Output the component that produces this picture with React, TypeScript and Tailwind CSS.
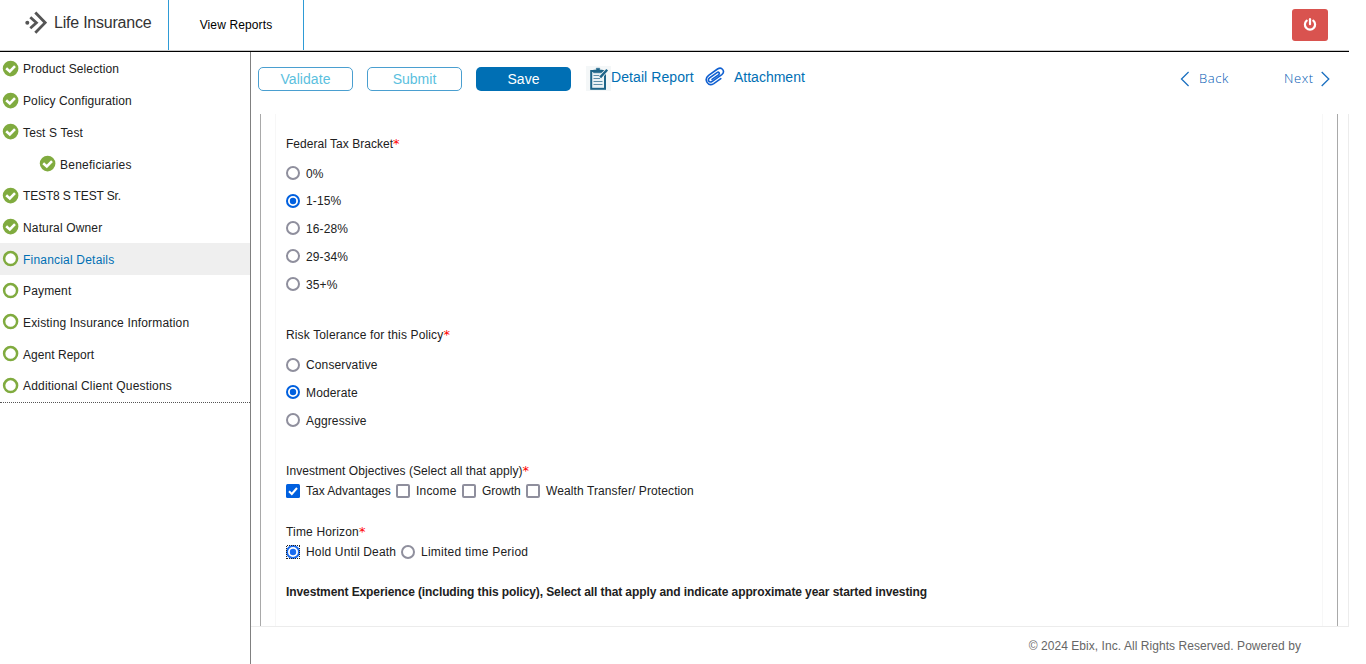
import React from "react";

type NavItem = { label: string; tracking: string; done: boolean; nested?: boolean; active?: boolean };

const NAV: NavItem[] = [
  { label: "Product Selection", tracking: "tracking-[0.12px]", done: true },
  { label: "Policy Configuration", tracking: "tracking-[0.1px]", done: true },
  { label: "Test S Test", tracking: "tracking-[0.14px]", done: true },
  { label: "Beneficiaries", tracking: "tracking-[0.23px]", done: true, nested: true },
  { label: "TEST8 S TEST Sr.", tracking: "tracking-[-0.15px]", done: true },
  { label: "Natural Owner", tracking: "tracking-[0.15px]", done: true },
  { label: "Financial Details", tracking: "tracking-[0.2px]", done: false, active: true },
  { label: "Payment", tracking: "tracking-[0.15px]", done: false },
  { label: "Existing Insurance Information", tracking: "tracking-[0.16px]", done: false },
  { label: "Agent Report", tracking: "tracking-[0.04px]", done: false },
  { label: "Additional Client Questions", tracking: "tracking-[0.18px]", done: false },
];

function StatusIcon({ done }: { done: boolean }) {
  return (
    <svg className="h-4 w-4 shrink-0 overflow-visible" viewBox="0 0 16 16">
      {done ? (
        <>
          <circle cx="7.6" cy="7.6" r="7.8" fill="#80ab3f" />
          <path d="M3.2 7.2 L6.8 10.4 L12 5.2" fill="none" stroke="#fff" strokeWidth="2.6" />
        </>
      ) : (
        <circle cx="7.6" cy="7.6" r="6.5" fill="#fff" stroke="#80ab3f" strokeWidth="2.5" />
      )}
    </svg>
  );
}

function Radio({ checked, focused }: { checked?: boolean; focused?: boolean }) {
  return (
    <svg className="h-[14px] w-[14px] shrink-0" viewBox="0 0 14 14">
      <circle
        cx="7"
        cy="7"
        r="6"
        fill="#fff"
        stroke={checked ? (focused ? "#1a6cf0" : "#0060df") : "#8f8f9d"}
        strokeWidth="2"
      />
      {checked && <circle cx="7" cy="7" r="3.2" fill={focused ? "#1a6cf0" : "#0060df"} />}
      {focused && (
        <path
          d="M1 0.5 H13.5 M0.5 1 V13.5 M13.5 1 V13.5 M1 13.5 H13.5"
          fill="none"
          stroke="#222"
          strokeDasharray="1 1"
          shapeRendering="crispEdges"
        />
      )}
    </svg>
  );
}

function Checkbox({ checked }: { checked?: boolean }) {
  return (
    <svg className="h-[14px] w-[14px] shrink-0" viewBox="0 0 14 14">
      {checked ? (
        <>
          <rect width="14" height="14" rx="1.5" fill="#0060df" />
          <path d="M3 7.2 L5.8 10 L11 4" fill="none" stroke="#fff" strokeWidth="2" />
        </>
      ) : (
        <rect x="1" y="1" width="12" height="12" rx="1" fill="#fff" stroke="#8f8f9d" strokeWidth="2" />
      )}
    </svg>
  );
}

function Label({ tracking, children }: { tracking: string; children: React.ReactNode }) {
  return (
    <div className="flex h-4 items-center whitespace-nowrap">
      <span className={tracking}>{children}</span>
      <span className="font-['DejaVu_Sans',sans-serif] text-[13px] leading-4 text-[#ff0000]">*</span>
    </div>
  );
}

function RadioList({ options, selected }: { options: string[]; selected: string }) {
  return (
    <div>
      {options.map((o) => (
        <div key={o} className="flex h-[27.8px] items-center gap-[6px]">
          <Radio checked={o === selected} />
          <span className="relative top-[0.65px] tracking-[0.13px]">{o}</span>
        </div>
      ))}
    </div>
  );
}

export default function App() {
  return (
    <div className="flex h-[664px] w-[1349px] flex-col overflow-hidden bg-white font-['Liberation_Sans',Arial,sans-serif] text-[12px] leading-4 text-[#212121]">
      <header className="flex h-[52px] shrink-0 border-b border-black">
        <div className="flex h-[51px] w-full border-b border-[#c8c8c8]">
          <div className="flex w-[169px] items-start border-r border-[#2e9bd6] pl-[25px] pt-[11px]">
            <svg className="h-6 w-[22px]" viewBox="0 0 22 24" fill="none" stroke="#555" strokeWidth="2.8">
              <circle cx="2.3" cy="11.7" r="2" fill="#555" stroke="none" />
              <path d="M5.3 6.2 L11.4 11.7 L5.3 17.2" />
              <path d="M10.3 1.6 L20.2 11.7 L10.3 21.8" />
            </svg>
            <span className="ml-[7px] mt-[2px] whitespace-nowrap text-[16px] leading-5 tracking-[-0.22px] text-[#333]">
              Life Insurance
            </span>
          </div>
          <div className="flex w-[135px] items-center justify-center whitespace-nowrap border-r border-[#2e9bd6] text-black">
            <span className="tracking-[0.13px]">View Reports</span>
          </div>
          <div className="flex flex-1 justify-end pr-[21px] pt-[9px]">
            <div className="flex h-8 w-9 items-center justify-center rounded-[3px] bg-[#d9534f]">
              <svg className="h-[14px] w-[14px]" viewBox="0 0 14 14" fill="none" stroke="#fff" strokeWidth="2.2" strokeLinecap="round">
                <path d="M3.7 2.6 A5.1 5.1 0 1 0 10.3 2.6" />
                <path d="M7 1.2 V6.2" />
              </svg>
            </div>
          </div>
        </div>
      </header>
      <div className="flex min-h-0 flex-1">
        <nav className="w-[251px] shrink-0 border-r border-[#808080] pt-px">
          <div className="border-b border-dotted border-[#555]">
            {NAV.map((n) => (
              <div
                key={n.label}
                className={`flex h-[31.7px] items-center gap-1 ${n.nested ? "pl-10" : "pl-[3px]"} ${
                  n.active ? "bg-[#efefef] text-[#006fb4]" : ""
                }`}
              >
                <StatusIcon done={n.done} />
                <span className={`relative top-[0.6px] whitespace-nowrap ${n.tracking}`}>{n.label}</span>
              </div>
            ))}
          </div>
        </nav>
        <main className="flex min-w-0 flex-1 flex-col">
          <div className="flex h-[62px] shrink-0 items-start pl-[7px] pt-[15px] text-[14px] text-[#006fb4]">
            <div className="flex h-6 w-[95px] items-center justify-center rounded-[5px] border border-[#4a9fd0] text-[#5bbfde]">
              <span className="tracking-[0.06px]">Validate</span>
            </div>
            <div className="ml-[14px] flex h-6 w-[95px] items-center justify-center rounded-[5px] border border-[#4a9fd0] text-[#5bbfde]">Submit</div>
            <div className="ml-[14px] flex h-6 w-[95px] items-center justify-center rounded-[5px] bg-[#006fb4] text-white">Save</div>
            <div className="-mt-px ml-[15px] flex h-[25px] w-[25px] items-center justify-center bg-[#f4f7f8]">
              <svg className="h-[25px] w-[25px]" viewBox="0 0 25 25" fill="none" stroke="#1d6488">
                <rect x="5.2" y="5" width="13.8" height="17.8" strokeWidth="2" fill="#eaf2f5" />
                <path d="M7.5 6.8 V4 H10.3 V2.2 H13.7 V4 H16.5 V6.8 Z" fill="#1d6488" strokeWidth="0.5" />
                <path d="M7.5 9.5 H14 M7.5 12.5 H14 M7.5 15.5 H16.5 M7.5 18.5 H16.5" stroke="#5d8fa8" strokeWidth="1.2" />
                <path d="M14.5 11 L21 4" stroke="#f4f8fa" strokeWidth="4" />
                <path d="M14.2 11.4 L21.2 3.8" strokeWidth="2.4" />
              </svg>
            </div>
            <span className="mt-[2px] w-[94px] whitespace-nowrap tracking-[0.08px]">Detail Report</span>
            <svg className="h-5 w-5" viewBox="0 0 20 20" fill="none" stroke="#0f5fd0" strokeWidth="1.6" strokeLinecap="round">
              <path d="M7 12.4 L13.5 7.8 C15.2 6.4 13.8 4.4 12 5.6 L4.6 10.9 C2 13.2 4.3 16.2 7.3 14.3 L16.8 7.6 C20.5 4.6 17 -0.8 12.5 2 L3.6 8.4 C-1.6 12.6 3 20 8.8 16.6 L15.8 11.6" />
            </svg>
            <span className="ml-[9px] mt-[2px] w-[446px] whitespace-nowrap">Attachment</span>
            <div className="mt-[4px] flex items-center font-['Open_Sans',sans-serif] text-[13px] text-[#0059b3]">
              <svg className="h-4 w-[9px]" viewBox="0 0 9 16" fill="none" stroke="#1a6fc0" strokeWidth="1.3">
                <path d="M8.6 1 L1.5 8 L8.6 15" />
              </svg>
              <span className="relative -top-px ml-[10px] w-[85px] tracking-[0.6px] [font-weight:330]">Back</span>
              <span className="relative -top-[0.6px] w-[37px] tracking-[0.6px] [font-weight:330]">Next</span>
              <svg className="h-4 w-[9px]" viewBox="0 0 9 16" fill="none" stroke="#1a6fc0" strokeWidth="1.3">
                <path d="M0.7 1 L7.8 8 L0.7 15" />
              </svg>
            </div>
          </div>
          <div className="min-h-0 flex-1 border-r border-[#ececec] pl-[9px] pr-[10px]">
            <div className="h-full border-x border-[#a9a9a9] px-[14px]">
              <div className="h-full overflow-hidden border-x border-[#f7f7f7] pl-[10px] pt-[22px]">
                <Label tracking="tracking-[0.03px]">Federal Tax Bracket</Label>
                <div className="mt-[7px]">
                  <RadioList options={["0%", "1-15%", "16-28%", "29-34%", "35+%"]} selected="1-15%" />
                </div>
                <div className="mt-[29px]">
                  <Label tracking="tracking-[0.14px]">Risk Tolerance for this Policy</Label>
                </div>
                <div className="mt-[7.7px]">
                  <RadioList options={["Conservative", "Moderate", "Aggressive"]} selected="Moderate" />
                </div>
                <div className="mt-[29.3px]">
                  <Label tracking="tracking-[0.07px]">Investment Objectives (Select all that apply)</Label>
                </div>
                <div className="mt-1 flex h-4 items-center whitespace-nowrap">
                  <Checkbox checked />
                  <span className="ml-[6px] w-[90px]">Tax Advantages</span>
                  <Checkbox />
                  <span className="ml-[6px] w-[46px] tracking-[0.2px]">Income</span>
                  <Checkbox />
                  <span className="ml-[6px] w-[44px]">Growth</span>
                  <Checkbox />
                  <span className="ml-[6px] tracking-[0.1px]">Wealth Transfer/ Protection</span>
                </div>
                <div className="mt-[25px]">
                  <Label tracking="tracking-[0.17px]">Time Horizon</Label>
                </div>
                <div className="mt-1 flex h-4 items-center whitespace-nowrap">
                  <Radio checked focused />
                  <span className="ml-[6px] w-[95px] tracking-[0.17px]">Hold Until Death</span>
                  <Radio />
                  <span className="ml-[6px] tracking-[0.24px]">Limited time Period</span>
                </div>
                <div className="mt-6 whitespace-nowrap font-bold tracking-[-0.096px]">
                  Investment Experience (including this policy), Select all that apply and indicate approximate year started investing
                </div>
              </div>
            </div>
          </div>
          <footer className="flex h-[38px] shrink-0 items-center justify-end border-t border-[#ececec] pr-[48px] text-[#666]">
            <span className="tracking-[0.055px]">© 2024 Ebix, Inc. All Rights Reserved. Powered by</span>
          </footer>
        </main>
      </div>
    </div>
  );
}
